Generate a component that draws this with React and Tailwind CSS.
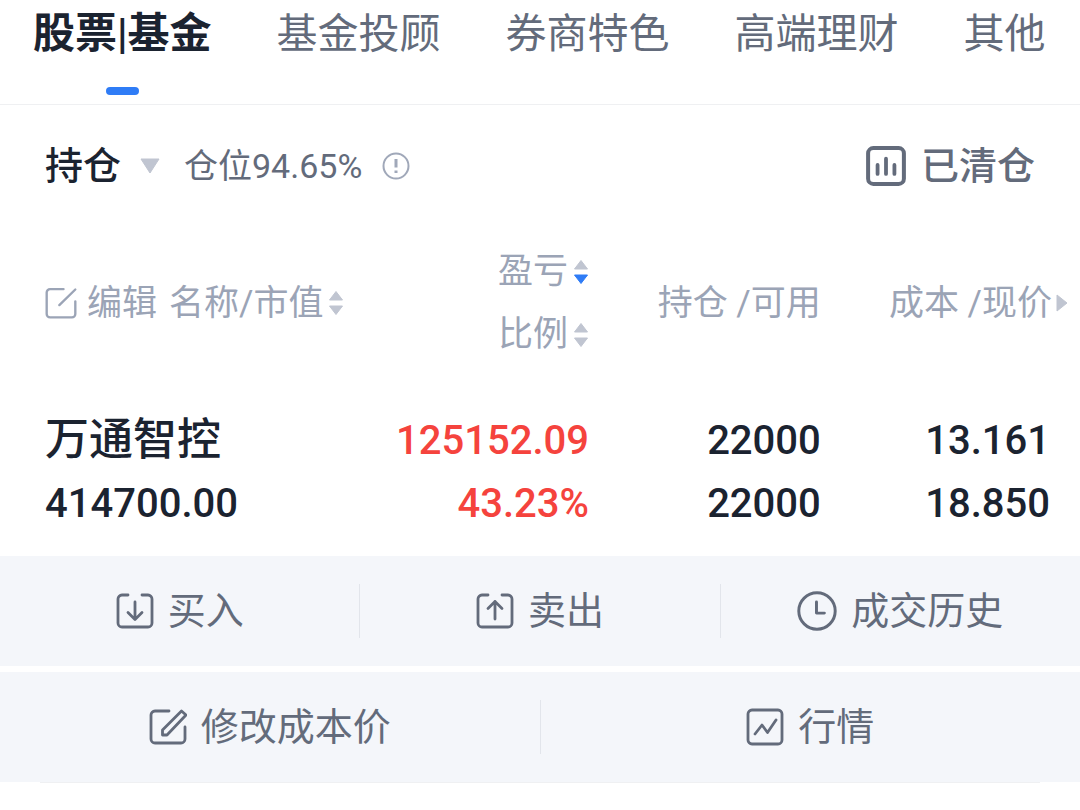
import React, { useState } from 'react';

const tabs = ['股票|基金', '基金投顾', '券商特色', '高端理财', '其他'];

const holdings = [
  {
    name: '万通智控',
    marketValue: '414700.00',
    profit: '125152.09',
    ratio: '43.23%',
    amount: '22000',
    available: '22000',
    cost: '13.161',
    price: '18.850'
  }
];

const Icon = ({ children, className = 'size-[38px]' }) => (
  <svg
    viewBox="0 0 38 38"
    fill="none"
    stroke="currentColor"
    strokeWidth="2.8"
    strokeLinecap="round"
    strokeLinejoin="round"
    className={`shrink-0 ${className}`}
    aria-hidden="true"
  >
    {children}
  </svg>
);

const BuyIcon = () => (
  <Icon>
    <path d="M12 3H6a4 4 0 0 0-4 4v24a4 4 0 0 0 4 4h26a4 4 0 0 0 4-4V7a4 4 0 0 0-4-4h-6" />
    <path d="M19 10v17M12 20.500 19 27.500l7-7" />
  </Icon>
);

const SellIcon = () => (
  <Icon>
    <path d="M12 3H6a4 4 0 0 0-4 4v24a4 4 0 0 0 4 4h26a4 4 0 0 0 4-4V7a4 4 0 0 0-4-4h-6" />
    <path d="M19 27V9.500M12 16.500 19 9.500l7 7" />
  </Icon>
);

const HistoryIcon = () => (
  <Icon className="size-10">
    <circle cx="19" cy="19" r="17.300" />
    <path d="M18.500 10.500v10.500h7.500" />
  </Icon>
);

const CostIcon = () => (
  <Icon>
    <path d="M20 3H6a4 4 0 0 0-4 4v24a4 4 0 0 0 4 4h26a4 4 0 0 0 4-4V19" />
    <path d="M32.500 3 37 7 18 27H13.500V22Z" />
  </Icon>
);

const QuoteIcon = () => (
  <Icon>
    <rect x="2" y="2" width="34" height="34" rx="4" />
    <path d="M9 26l7-9 5.500 7.500L30 12" />
  </Icon>
);

const ClearedIcon = () => (
  <Icon className="size-10">
    <rect x="2" y="2" width="34" height="34" rx="5" strokeWidth="3.800" />
    <path d="M11 18v8.500M19 12v14.500M27 18v8.500" strokeWidth="3.600" />
  </Icon>
);

const EditIcon = () => (
  <Icon className="size-8">
    <path d="M22 2.500H6a4 4 0 0 0-4 4V32a4 4 0 0 0 4 4h26a4 4 0 0 0 4-4V17M17 21.500 36 3" />
  </Icon>
);

const SortIcon = ({ active }) => (
  <svg viewBox="0 0 16 26" className="h-[26px] w-4 shrink-0" aria-hidden="true">
    <path d="M8 1.500 14.500 10h-13Z" fill="#c0c5d1" stroke="#c0c5d1" strokeLinejoin="round" />
    <path
      d="M8 24.500 1.500 16h13Z"
      fill={active ? '#2f7cf6' : '#c0c5d1'}
      stroke={active ? '#2f7cf6' : '#c0c5d1'}
      strokeLinejoin="round"
    />
  </svg>
);

const SortButton = ({ label, active, onClick }) => (
  <button type="button" onClick={onClick} className="flex items-center gap-[5px] leading-[63px]">
    {label}
    <SortIcon active={active} />
  </button>
);

const Action = ({ icon, label }) => (
  <button type="button" className="flex flex-1 items-center justify-center gap-[14px] py-7 leading-[54px]">
    {icon}
    {label}
  </button>
);

const Divider = () => <span className="my-7 w-px bg-[#e2e5eb]" />;

const App = () => {
  const [activeTab, setActiveTab] = useState(tabs[0]);
  const [sortKey, setSortKey] = useState('profit');

  return (
    <div className="overflow-hidden bg-white font-[Roboto,'Noto_Sans_CJK_SC',sans-serif] text-[#1b2330]">
      {/* Tabs */}
      <nav className="flex gap-[65px] border-b border-[#eff0f2] px-[33px] pb-[9px]">
        {tabs.map((tab) => (
          <button
            key={tab}
            type="button"
            onClick={() => setActiveTab(tab)}
            className={`flex shrink-0 flex-col items-center leading-[68px] whitespace-nowrap ${
              activeTab === tab ? 'text-[42px] font-bold' : 'text-[41px] text-[#636b7b]'
            }`}
          >
            {tab}
            {activeTab === tab && <span className="mt-[19px] h-2 w-[33px] rounded-full bg-[#2f7cf6]" />}
          </button>
        ))}
      </nav>

      {/* Position summary */}
      <div className="flex items-center justify-between px-[45px] py-9 text-[38px] leading-[50px]">
        <div className="flex items-center">
          <label className="flex items-center gap-[18px]">
            <select aria-label="持仓" className="appearance-none font-medium">
              <option>持仓</option>
            </select>
            <svg viewBox="0 0 20 16" className="h-4 w-5" aria-hidden="true">
              <path d="M1 1h18L10 15Z" fill="#c0c5d1" stroke="#c0c5d1" strokeLinejoin="round" />
            </svg>
          </label>
          <span className="ml-6 text-[34px] text-[#636b7b]">仓位94.65%</span>
          <button type="button" aria-label="仓位说明" className="ml-5 text-[#a0a8b9]">
            <svg viewBox="0 0 28 28" fill="none" stroke="currentColor" className="size-7">
              <circle cx="14" cy="14" r="12.500" strokeWidth="2" />
              <path d="M14 7v8.500M14 18.500v2.500" strokeWidth="3" />
            </svg>
          </button>
        </div>
        <button type="button" className="flex items-center gap-[15px] font-medium text-[#636b7b]">
          <ClearedIcon />
          已清仓
        </button>
      </div>

      {/* Holdings */}
      <table className="w-full table-fixed">
        <colgroup>
          <col className="w-[35%]" />
          <col className="w-[20%]" />
          <col className="w-[21%]" />
          <col className="w-[24%]" />
        </colgroup>
        <thead className="text-[35px] leading-[63px] whitespace-nowrap text-[#9ba4b6]">
          <tr>
            <th className="pt-[13px] pl-[45px] font-normal">
              <div className="flex items-center gap-3">
                <button type="button" className="flex items-center gap-[10px]">
                  <EditIcon />
                  编辑
                </button>
                <SortButton label="名称/市值" active={sortKey === 'name'} onClick={() => setSortKey('name')} />
              </div>
            </th>
            <th className="pt-[13px] pr-[5px] font-normal">
              <div className="flex flex-col items-end">
                <SortButton label="盈亏" active={sortKey === 'profit'} onClick={() => setSortKey('profit')} />
                <SortButton label="比例" active={sortKey === 'ratio'} onClick={() => setSortKey('ratio')} />
              </div>
            </th>
            <th className="pt-[13px] text-right font-normal">持仓 /可用</th>
            <th className="pt-[13px] pr-3 font-normal">
              <div className="flex items-center justify-end gap-1">
                成本 /现价
                <svg viewBox="0 0 12 18" className="h-[18px] w-3" aria-hidden="true">
                  <path d="M1 1v16l10-8Z" fill="#c0c5d1" stroke="#c0c5d1" strokeLinejoin="round" />
                </svg>
              </div>
            </th>
          </tr>
        </thead>
        <tbody className="text-right text-[40px] leading-[63px] font-medium">
          {holdings.map((item) => (
            <tr key={item.name}>
              <td className="pt-[43px] pb-[21px] pl-[45px] text-left">
                <div className="text-[44px]">{item.name}</div>
                <div>{item.marketValue}</div>
              </td>
              <td className="pt-[43px] pr-[5px] pb-[21px] text-[#f5433d]">
                <div>{item.profit}</div>
                <div>{item.ratio}</div>
              </td>
              <td className="pt-[43px] pb-[21px]">
                <div>{item.amount}</div>
                <div>{item.available}</div>
              </td>
              <td className="pt-[43px] pr-[30px] pb-[21px]">
                <div>{item.cost}</div>
                <div>{item.price}</div>
              </td>
            </tr>
          ))}
        </tbody>
      </table>

      {/* Actions */}
      <div className="flex flex-col gap-[6px] text-[38px] text-[#636b7b]">
        <div className="flex bg-[#f4f6fa]">
          <Action icon={<BuyIcon />} label="买入" />
          <Divider />
          <Action icon={<SellIcon />} label="卖出" />
          <Divider />
          <Action icon={<HistoryIcon />} label="成交历史" />
        </div>
        <div className="flex bg-[#f4f6fa]">
          <Action icon={<CostIcon />} label="修改成本价" />
          <Divider />
          <Action icon={<QuoteIcon />} label="行情" />
        </div>
      </div>
      <div className="mx-10 h-px bg-[#eff0f2]" />
    </div>
  );
};

export default App;
